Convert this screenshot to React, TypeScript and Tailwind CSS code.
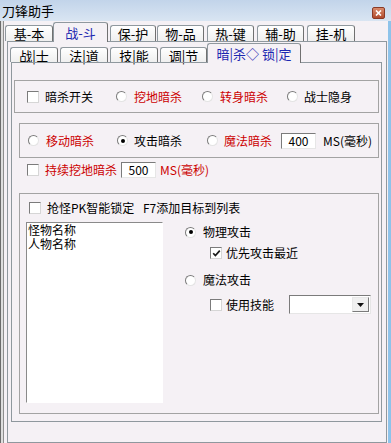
import React from 'react';

const font = "font-['Noto_Sans_CJK_SC','Noto_Sans',sans-serif]";

const Check = ({ checked = false }: { checked?: boolean }) => (
  <span className="w-[12px] h-[12px] shrink-0 bg-white border border-t-[#7b7b7b] border-l-[#7b7b7b] border-r-[#d6d6d6] border-b-[#d6d6d6] flex items-center justify-center">
    {checked && (
      <svg width="9" height="9" viewBox="0 0 9 9">
        <polyline points="1.2,4.2 3.4,6.6 7.8,1.6" fill="none" stroke="#1a1a1a" strokeWidth="1.7" />
      </svg>
    )}
  </span>
);

const Radio = ({ checked = false }: { checked?: boolean }) => (
  <span className="w-[11px] h-[11px] shrink-0 rounded-full bg-white border border-t-[#7b7b7b] border-l-[#7b7b7b] border-r-[#e4e4e4] border-b-[#e4e4e4] flex items-center justify-center">
    {checked && <span className="w-[4px] h-[4px] rounded-full bg-black" />}
  </span>
);

const Field = ({ value }: { value: string }) => (
  <div className="w-[35px] h-[16px] shrink-0 bg-white border border-t-[#7b7b7b] border-l-[#7b7b7b] border-r-[#e6e6e6] border-b-[#e6e6e6] flex items-center justify-center text-[12px] leading-[14px] text-black">
    {value}
  </div>
);

const TopTab = ({ label, className }: { label: string; className: string }) => (
  <div
    className={
      'shrink-0 flex items-center justify-center rounded-t-[3px] border border-b-0 border-[#8f989e] border-r-[#707070] text-[13px] leading-[15px] ' +
      className
    }
  >
    {label}
  </div>
);

export default function App() {
  return (
    <div className={`w-[391px] h-[443px] flex flex-col overflow-hidden bg-[#f5f1f5] text-black ${font}`}>
      {/* title bar */}
      <div className="h-[21px] shrink-0 flex items-center justify-between pl-[2px] pr-[6px] bg-gradient-to-b from-[#c2d4ea] to-[#d9e5f2]">
        <span className="text-[13px] leading-[15px] text-black">刀锋助手</span>
        <div className="mt-[5px] w-[13px] h-[12px] rounded-[2px] border border-[#8a3a26] bg-gradient-to-b from-[#d98b6c] to-[#b14a2d] flex items-center justify-center">
          <svg width="7" height="6" viewBox="0 0 7 6">
            <path d="M1 0.5 L6 5.5 M6 0.5 L1 5.5" stroke="white" strokeWidth="1.6" />
          </svg>
        </div>
      </div>

      <div className="flex-1 flex min-h-0">
        {/* left frame */}
        <div className="w-[1px] bg-[#6c6c6c]" />
        <div className="w-[2px] bg-[#dedede]" />
        <div className="w-[1px] bg-[#8e8e8e]" />

        <div className="w-[384px] flex flex-col">
          {/* main tabs */}
          <div className="h-[20px] shrink-0 flex items-end">
            <TopTab label="基-本" className="ml-[1px] w-[48px] h-[16px] bg-gradient-to-b from-white to-[#efefef]" />
            <TopTab label="战-斗" className="w-[55px] h-[20px] -mb-[1px] relative z-10 bg-[#f5f1f5] text-[#1b27b0]" />
            <TopTab label="保-护" className="ml-[2px] w-[46px] h-[16px] bg-gradient-to-b from-white to-[#efefef]" />
            <TopTab label="物-品" className="ml-[1px] w-[47px] h-[16px] bg-gradient-to-b from-white to-[#efefef]" />
            <TopTab label="热-键" className="ml-[3px] w-[47px] h-[16px] bg-gradient-to-b from-white to-[#efefef]" />
            <TopTab label="辅-助" className="ml-[3px] w-[47px] h-[16px] bg-gradient-to-b from-white to-[#efefef]" />
            <TopTab label="挂-机" className="ml-[3px] w-[48px] h-[16px] bg-gradient-to-b from-white to-[#efefef]" />
          </div>

          {/* main panel */}
          <div className="ml-[3px] w-[380px] h-[402px] border border-[#8f989e] flex flex-col">
            <div className="h-[20px] shrink-0 flex items-end">
              <TopTab label="战|士" className="ml-[2px] w-[48px] h-[15px] bg-gradient-to-b from-white to-[#efefef]" />
              <TopTab label="法|道" className="ml-[2px] w-[48px] h-[15px] bg-gradient-to-b from-white to-[#efefef]" />
              <TopTab label="技|能" className="ml-[2px] w-[48px] h-[15px] bg-gradient-to-b from-white to-[#efefef]" />
              <TopTab label="调|节" className="ml-[2px] w-[47px] h-[15px] bg-gradient-to-b from-white to-[#efefef]" />
              <TopTab label="暗|杀◇ 锁|定" className="w-[94px] h-[20px] -mb-[1px] relative z-10 bg-[#f5f1f5] text-[#1b27b0]" />
            </div>

            {/* sub panel */}
            <div className="ml-[3px] w-[371px] h-[360px] border border-[#8f989e] flex flex-col text-[12px] leading-[14px]">
              {/* group 1 */}
              <div className="ml-[2px] mt-[17px] w-[365px] h-[33px] shrink-0 border border-[#a3a3a3] flex items-center pl-[12px]">
                <div className="w-[89px] flex items-center gap-[6px]">
                  <Check />
                  <span>暗杀开关</span>
                </div>
                <div className="w-[86px] flex items-center gap-[7px]">
                  <Radio />
                  <span className="text-[#cc0000]">挖地暗杀</span>
                </div>
                <div className="w-[85px] flex items-center gap-[7px]">
                  <Radio />
                  <span className="text-[#cc0000]">转身暗杀</span>
                </div>
                <div className="flex items-center gap-[6px]">
                  <Radio />
                  <span>战士隐身</span>
                </div>
              </div>

              {/* group 2 */}
              <div className="ml-[7px] mt-[10px] w-[360px] h-[35px] shrink-0 border border-[#a3a3a3] flex items-center pl-[8px]">
                <div className="w-[89px] flex items-center gap-[7px]">
                  <Radio />
                  <span className="text-[#cc0000]">移动暗杀</span>
                </div>
                <div className="w-[90px] flex items-center gap-[6px]">
                  <Radio checked />
                  <span>攻击暗杀</span>
                </div>
                <div className="w-[74px] flex items-center gap-[6px]">
                  <Radio />
                  <span className="text-[#cc0000]">魔法暗杀</span>
                </div>
                <Field value="400" />
                <span className="ml-[7px]">MS(毫秒)</span>
              </div>

              {/* persist row */}
              <div className="ml-[15px] mt-[4px] h-[16px] shrink-0 flex items-center">
                <Check />
                <span className="ml-[6px] text-[#cc0000]">持续挖地暗杀</span>
                <div className="ml-[4px]">
                  <Field value="500" />
                </div>
                <span className="ml-[4px] text-[#cc0000]">MS(毫秒)</span>
              </div>

              {/* group 3 */}
              <div className="ml-[7px] mt-[15px] w-[360px] h-[221px] shrink-0 border border-[#a3a3a3] flex flex-col">
                <div className="ml-[9px] mt-[7px] h-[14px] flex items-center">
                  <Check />
                  <span className="ml-[6px] w-[96px]">抢怪PK智能锁定</span>
                  <span>F7添加目标到列表</span>
                </div>
                <div className="mt-[7px] flex">
                  <div className="ml-[6px] w-[137px] h-[181px] bg-white border border-t-[#8a8a8a] border-l-[#8a8a8a] border-r-white border-b-white pl-[1px] text-[12px] leading-[14px]">
                    <div>怪物名称</div>
                    <div>人物名称</div>
                  </div>
                  <div className="ml-[22px] pt-[3px] flex flex-col">
                    <div className="h-[14px] flex items-center gap-[7px]">
                      <Radio checked />
                      <span>物理攻击</span>
                    </div>
                    <div className="mt-[7px] ml-[25px] h-[14px] flex items-center gap-[4px]">
                      <Check checked />
                      <span>优先攻击最近</span>
                    </div>
                    <div className="mt-[13px] h-[14px] flex items-center gap-[7px]">
                      <Radio />
                      <span>魔法攻击</span>
                    </div>
                    <div className="mt-[8px] ml-[25px] h-[19px] flex items-center">
                      <Check />
                      <span className="ml-[4px]">使用技能</span>
                      <div className="ml-[15px] w-[82px] h-[19px] bg-white border border-t-[#7b7b7b] border-l-[#7b7b7b] border-r-[#e6e6e6] border-b-[#e6e6e6] flex justify-end items-center pr-[1px]">
                        <div className="w-[17px] h-[15px] bg-[#f0f0f0] border border-[#e8e8e8] border-r-[#7b7b7b] border-b-[#7b7b7b] flex items-center justify-center">
                          <svg width="7" height="4" viewBox="0 0 7 4">
                            <polygon points="0,0 7,0 3.5,4" fill="#111" />
                          </svg>
                        </div>
                      </div>
                    </div>
                  </div>
                </div>
              </div>
            </div>
          </div>
        </div>

        {/* right frame */}
        <div className="w-[3px] bg-[#8ec3ea]" />
      </div>
    </div>
  );
}
